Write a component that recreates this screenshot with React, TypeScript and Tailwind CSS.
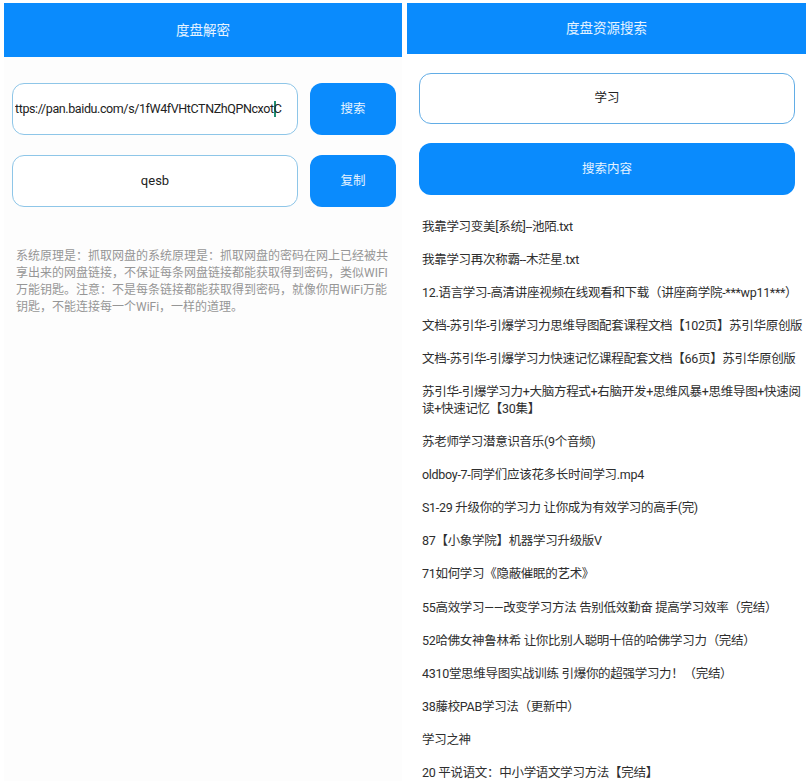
const results = [
  "我靠学习变美[系统]--池陌.txt",
  "我靠学习再次称霸--木茫星.txt",
  "12.语言学习-高清讲座视频在线观看和下载（讲座商学院-***wp11***）",
  "文档-苏引华-引爆学习力思维导图配套课程文档【102页】苏引华原创版",
  "文档-苏引华-引爆学习力快速记忆课程配套文档【66页】苏引华原创版",
  "苏引华-引爆学习力+大脑方程式+右脑开发+思维风暴+思维导图+快速阅读+快速记忆【30集】",
  "苏老师学习潜意识音乐(9个音频)",
  "oldboy-7-同学们应该花多长时间学习.mp4",
  "S1-29 升级你的学习力 让你成为有效学习的高手(完)",
  "87【小象学院】机器学习升级版V",
  "71如何学习《隐蔽催眠的艺术》",
  "55高效学习——改变学习方法 告别低效勤奋 提高学习效率（完结）",
  "52哈佛女神鲁林希 让你比别人聪明十倍的哈佛学习力（完结）",
  "4310堂思维导图实战训练 引爆你的超强学习力！（完结）",
  "38藤校PAB学习法（更新中）",
  "学习之神",
  "20 平说语文：中小学语文学习方法【完结】",
];

function Header({ title, tall }: { title: string; tall?: boolean }) {
  return (
    <div
      className={
        (tall ? "h-[54px]" : "h-[51px]") +
        " bg-[#0a8bfd] flex items-center justify-center text-white/90 text-[13.5px]"
      }
    >
      {title}
    </div>
  );
}

// 度盘解密
function DecryptPanel() {
  return (
    <div className="w-[398px] shrink-0 bg-[#fdfdfd]">
      <Header title="度盘解密" tall />

      <div className="mt-[26px] flex flex-col gap-[20px] pl-[8px] pr-[6px]">
        <div className="flex h-[52px] gap-[12px]">
          <div className="w-[286px] rounded-[12px] border-[1.5px] border-[#8ec6e8] bg-white flex items-center overflow-hidden pl-[2px] pr-[3px]">
            <div className="flex-1 overflow-hidden whitespace-nowrap text-[12.5px] tracking-[-0.4px] text-[#222]">
              ttps://pan.baidu.com/s/1fW4fVHtCTNZhQPNcxot
              <span className="inline-block w-[2px] h-[16px] bg-[#1f8f73] align-middle -mr-[2px]" />
              C
            </div>
          </div>
          <button className="w-[86px] rounded-[12px] bg-[#0a8bfd] text-white/90 text-[12.5px]">
            搜索
          </button>
        </div>

        <div className="flex h-[52px] gap-[12px]">
          <div className="w-[286px] rounded-[12px] border-[1.5px] border-[#8ec6e8] bg-white flex items-center justify-center text-[13px] text-[#222]">
            qesb
          </div>
          <button className="w-[86px] rounded-[12px] bg-[#0a8bfd] text-white/90 text-[12.5px]">
            复制
          </button>
        </div>
      </div>

      <p className="mt-[41px] px-[12px] text-[12px] leading-[17px] text-[#969696] whitespace-nowrap">
        系统原理是：抓取网盘的系统原理是：抓取网盘的密码在网上已经被共
        <br />
        享出来的网盘链接，不保证每条网盘链接都能获取得到密码，类似WIFI
        <br />
        万能钥匙。注意：不是每条链接都能获取得到密码，就像你用WiFi万能
        <br />
        钥匙，不能连接每一个WiFi，一样的道理。
      </p>
    </div>
  );
}

// 度盘资源搜索
function SearchPanel() {
  return (
    <div className="flex-1 min-w-0 bg-white">
      <Header title="度盘资源搜索" />

      <div className="pl-[12px] pr-[11px]">
        <div className="mt-[19px] h-[51px] rounded-[12px] border-[1.5px] border-[#62ade6] flex items-center justify-center text-[12.5px] text-[#222]">
          学习
        </div>
        <button className="mt-[19px] w-full h-[52px] rounded-[12px] bg-[#0a8bfd] text-white/90 text-[12.5px]">
          搜索内容
        </button>
      </div>

      <ul className="mt-[24px] pl-[15px] flex flex-col gap-[16.6px] text-[12.5px] leading-[16.5px] tracking-[-0.3px] text-[#2e2e2e]">
        {results.map((r) => (
          <li key={r}>{r}</li>
        ))}
      </ul>
    </div>
  );
}

export default function App() {
  return (
    <div className="w-[806px] h-[781px] overflow-hidden bg-white flex gap-[5px] pt-[3px] pl-[4px] [font-family:Roboto,'Noto_Sans_CJK_SC',sans-serif]">
      <DecryptPanel />
      <SearchPanel />
    </div>
  );
}
